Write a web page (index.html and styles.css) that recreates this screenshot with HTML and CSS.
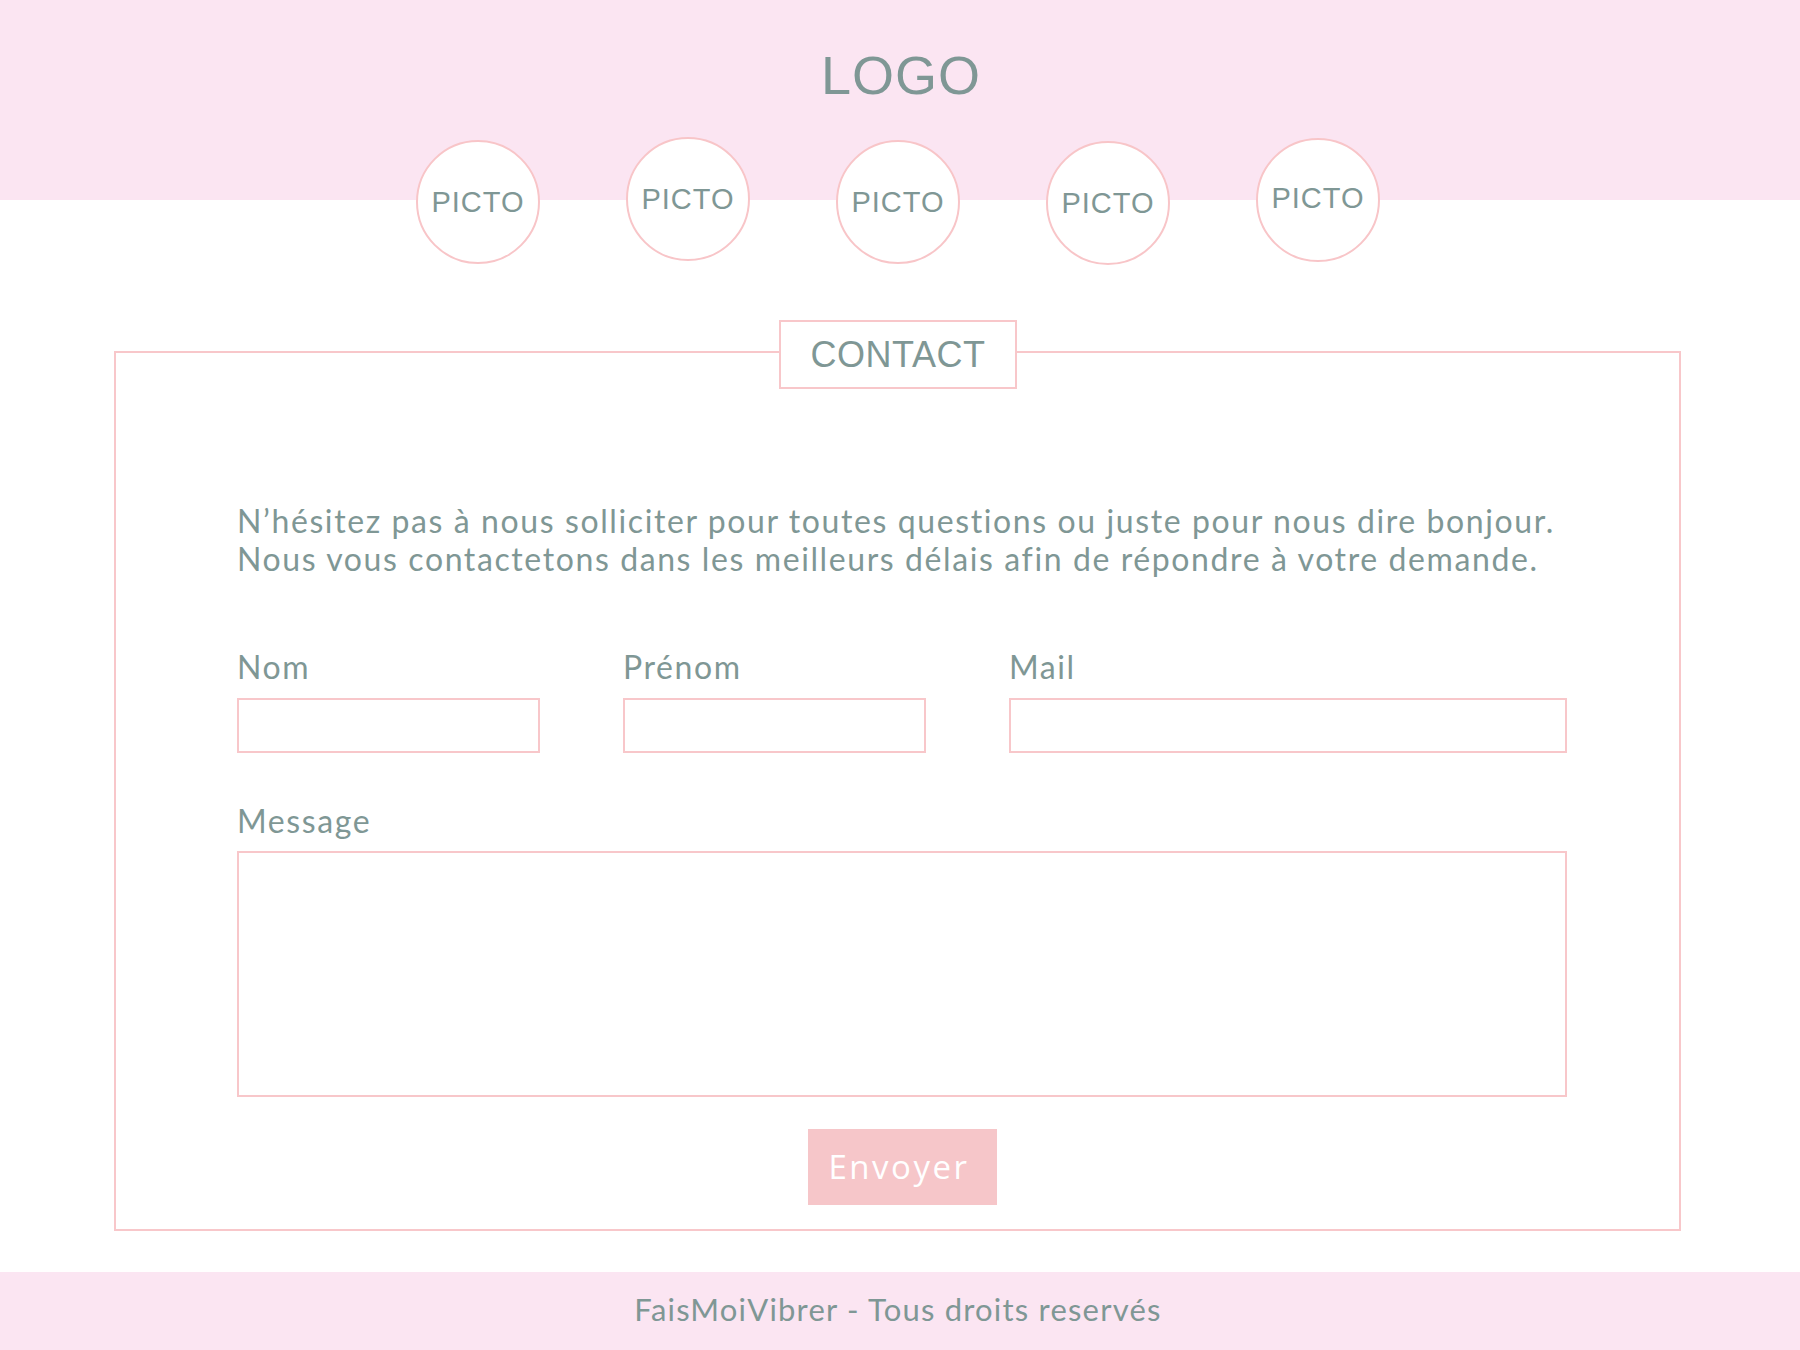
FILE: index.html
```html
<!DOCTYPE html>
<html lang="fr">

<head>
    <meta charset="UTF-8">
    <meta name="viewport" content="width=device-width, initial-scale=1.0">
    <title>Contact - FaisMoiVibrer</title>
    <link rel="stylesheet" href="styles.css">
</head>
<body>
    <header class="top">
        <div class="logo">LOGO</div>
    </header>

    <nav class="pictos">
        <a class="picto" href="#">PICTO</a>
        <a class="picto picto-high" href="#">PICTO</a>
        <a class="picto" href="#">PICTO</a>
        <a class="picto picto-low" href="#">PICTO</a>
        <a class="picto picto-last" href="#">PICTO</a>
    </nav>

    <section class="frame">
        <h2 class="frame-title">CONTACT</h2>

        <p class="intro">
            N’hésitez pas à nous solliciter pour toutes questions ou juste pour nous dire bonjour.<br>
            Nous vous contactetons dans les meilleurs délais afin de répondre à votre demande.
        </p>

        <form class="contact-form" onsubmit="return false;">
            <div class="fields">
                <label class="field">
                    <span class="field-label">Nom</span>
                    <input type="text" name="nom">
                </label>
                <label class="field">
                    <span class="field-label">Prénom</span>
                    <input type="text" name="prenom">
                </label>
                <label class="field">
                    <span class="field-label">Mail</span>
                    <input type="email" name="mail">
                </label>
            </div>

            <label class="field field-message">
                <span class="field-label">Message</span>
                <textarea name="message"></textarea>
            </label>

            <button class="send-button" type="submit">Envoyer</button>
        </form>
    </section>

    <footer class="bottom">
        FaisMoiVibrer - Tous droits reservés
    </footer>
</body>
</html>
```

FILE: styles.css
```css
body {
    margin: 0;
    padding: 0;
    background-color: white;
    color: #7f9795;
    font-family: Lato, "Open Sans", sans-serif;
}

.top {
    height: 200px;
    background-color: #fbe5f2;
    text-align: center;
}

.logo {
    padding-top: 48px;
    padding-left: 2px;
    font-family: "Liberation Sans", Arial, sans-serif;
    font-size: 54px;
    line-height: 54px;
    letter-spacing: 1px;
}

.pictos {
    display: flex;
    justify-content: center;
    align-items: flex-start;
    gap: 86px;
    margin-top: -60px;
    padding-right: 4px;
}

.picto {
    box-sizing: border-box;
    width: 124px;
    height: 124px;
    border: 2px solid #f8c5c8;
    border-radius: 50%;
    background-color: white;
    display: flex;
    justify-content: center;
    align-items: center;
    color: #7f9795;
    text-decoration: none;
    font-family: "Liberation Sans", Arial, sans-serif;
    font-size: 29px;
    letter-spacing: 1px;
}

.picto-high {
    margin-top: -3px;
}

.picto-low {
    margin-top: 1px;
}

.picto-last {
    margin-top: -2px;
    padding-bottom: 4px;
}

.frame {
    margin: 86px 119px 0 114px;
    padding: 0 112px 24px 121px;
    border: 2px solid #f8c7ca;
}

.frame-title {
    box-sizing: border-box;
    width: 238px;
    height: 69px;
    margin: -33px auto 0;
    border: 2px solid #f8c7ca;
    background-color: white;
    font-family: "Liberation Sans", Arial, sans-serif;
    font-size: 36px;
    font-weight: normal;
    line-height: 65px;
    letter-spacing: 0.5px;
    text-align: center;
    position: relative;
    left: -4px;
}

.intro {
    margin: 113px 0 0;
    font-size: 32px;
    line-height: 38px;
    letter-spacing: 1.6px;
    white-space: nowrap;
}

.fields {
    display: grid;
    grid-template-columns: 303px 303px 1fr;
    column-gap: 83px;
    margin-top: 70px;
}

.field {
    display: block;
}

.field-label {
    display: block;
    margin-bottom: 12px;
    font-size: 32px;
    line-height: 38px;
    letter-spacing: 1.6px;
}

.field input,
.field textarea {
    display: block;
    box-sizing: border-box;
    width: 100%;
    margin: 0;
    border: 2px solid #f8c7ca;
    border-radius: 0;
    background-color: white;
    outline: none;
    font-family: Lato, sans-serif;
    font-size: 24px;
    color: #7f9795;
}

.field input {
    height: 55px;
}

.field-message {
    margin-top: 49px;
}

.field-message .field-label {
    margin-bottom: 11px;
}

.field textarea {
    height: 246px;
    resize: none;
}

.send-button {
    display: block;
    width: 189px;
    height: 76px;
    margin: 32px auto 0;
    padding: 0 6px 0 0;
    border: none;
    background-color: #f6c6c9;
    color: white;
    font-family: "Open Sans", sans-serif;
    font-size: 33px;
    line-height: 76px;
    letter-spacing: 2.5px;
    cursor: pointer;
}

.bottom {
    height: 79px;
    margin-top: 41px;
    box-sizing: border-box;
    padding-right: 4px;
    background-color: #fbe5f2;
    text-align: center;
    font-size: 31px;
    line-height: 75px;
    letter-spacing: 1.2px;
}
```
